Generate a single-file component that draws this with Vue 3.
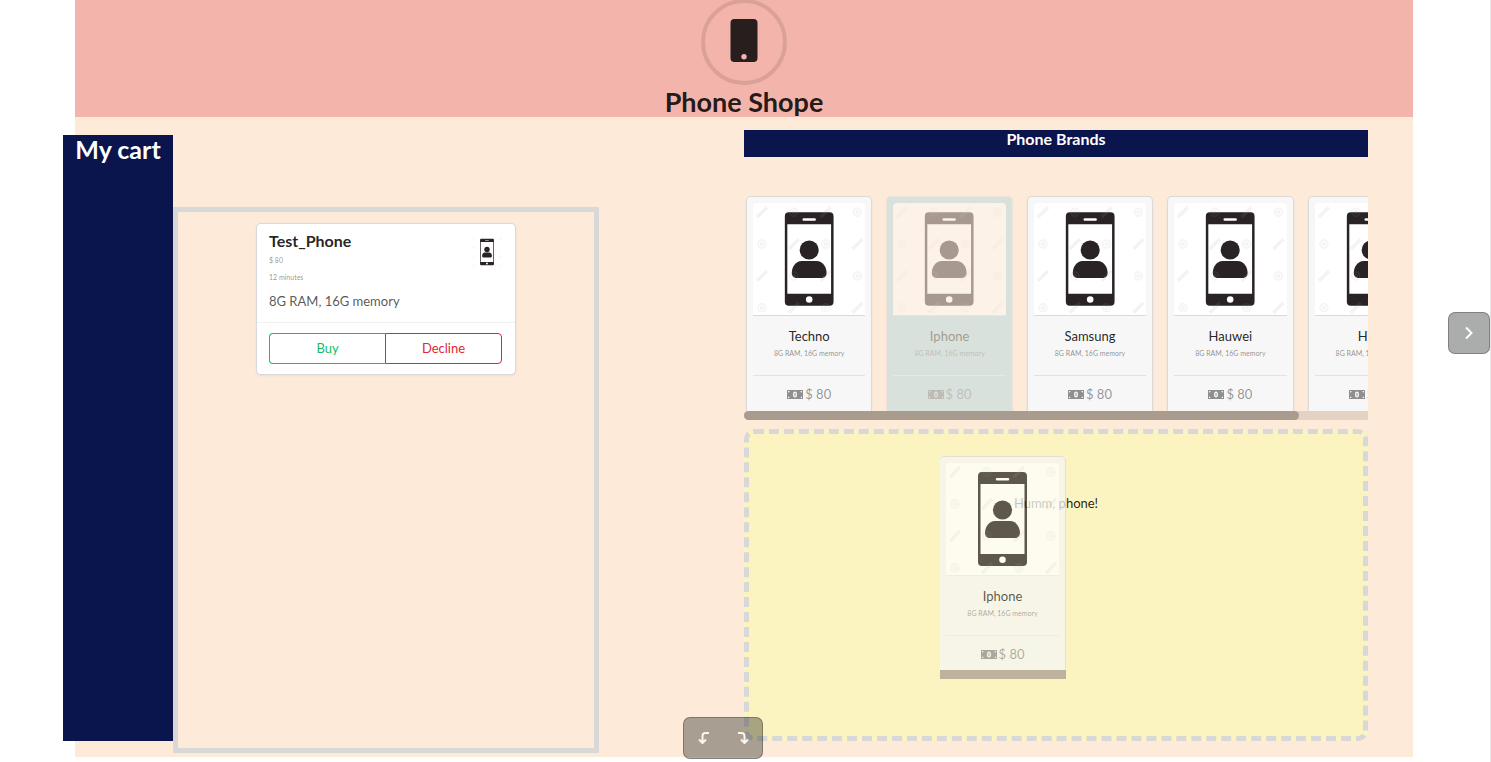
<script setup>
const phones = [
  { id: 1, name: 'Techno', memory: '8G RAM, 16G memory', price: 80 },
  { id: 2, name: 'Iphone', memory: '8G RAM, 16G memory', price: 80, dragging: true },
  { id: 3, name: 'Samsung', memory: '8G RAM, 16G memory', price: 80 },
  { id: 4, name: 'Hauwei', memory: '8G RAM, 16G memory', price: 80 },
  { id: 5, name: 'HTC', memory: '8G RAM, 16G memory', price: 80 },
]
const dragged = phones[1]

const marks = []
for (let row = 0; row < 4; row++) {
  for (let col = 0; col < 4; col++) {
    marks.push({ x: 9 + col * 32, y: 9 + row * 32, round: (row + col) % 2 === 1 })
  }
}
</script>

<template>
  <svg class="defs" aria-hidden="true">
    <symbol id="phone-art" viewBox="0 0 113 112">
      <path
        fill-rule="evenodd"
        fill="#292326"
        d="M36 9h41a4 4 0 0 1 4 4v86a4 4 0 0 1-4 4H36a4 4 0 0 1-4-4V13a4 4 0 0 1 4-4ZM34.500 21v70h44V21ZM51 15a1 1 0 0 0 0 2.500h11a1 1 0 0 0 0-2.500ZM56.500 93.500a3.300 3.300 0 1 0 0 6.600 3.300 3.300 0 0 0 0-6.600Z"
      />
      <circle cx="56.500" cy="47" r="9.600" fill="#292326" />
      <path d="M49 58h15c6 0 10 6 10 12 0 3-2 5-5 5H44c-3 0-5-2-5-5 0-6 4-12 10-12Z" fill="#292326" />
      <g v-for="(m, i) in marks" :key="i" fill="none" stroke="#999" stroke-opacity=".12">
        <g v-if="m.round" stroke-width="1.500">
          <circle :cx="m.x" :cy="m.y" r="4" />
          <circle :cx="m.x" :cy="m.y" r="1.500" />
        </g>
        <path v-else :d="`M${m.x - 5} ${m.y + 5}l10-10`" stroke-width="3.500" />
      </g>
    </symbol>
    <symbol id="money" viewBox="0 0 16 9">
      <path
        fill="currentColor"
        fill-rule="evenodd"
        d="M0 0h16v9H0ZM1 1v1.500A1.500 1.500 0 0 0 2.500 1ZM13.500 1A1.500 1.500 0 0 0 15 2.500V1ZM1 6.500V8h1.500A1.500 1.500 0 0 0 1 6.500ZM15 6.500A1.500 1.500 0 0 0 13.500 8H15ZM8 1.500c-1.300 0-2 1.300-2 3s.7 3 2 3 2-1.300 2-3-.7-3-2-3Z"
      />
      <path d="M7.500 3h1v3h-1Z" fill="currentColor" />
    </symbol>
  </svg>

  <div class="page">
    <header class="banner">
      <svg class="logo" viewBox="0 1 86 85" aria-hidden="true">
        <circle cx="43" cy="43" r="41" fill="none" stroke="#000" stroke-opacity=".1" stroke-width="4" />
        <path
          fill-rule="evenodd"
          fill="#271e1d"
          d="M33.500 20h19a4 4 0 0 1 4 4v35a4 4 0 0 1-4 4h-19a4 4 0 0 1-4-4V24a4 4 0 0 1 4-4ZM43 55a2.700 2.700 0 1 0 0 5.400 2.700 2.700 0 0 0 0-5.400Z"
        />
      </svg>
      <h1>Phone Shope</h1>
    </header>

    <main class="workspace">
      <section class="left">
        <aside class="cart-label"><h2>My cart</h2></aside>
        <div class="cart">
          <article class="order">
            <div class="order-body">
              <svg class="thumb" aria-hidden="true"><use href="#phone-art" /></svg>
              <h3>Test_Phone</h3>
              <p class="meta">$ 80</p>
              <p class="meta">12 minutes</p>
              <p class="spec">8G RAM, 16G memory</p>
            </div>
            <div class="actions">
              <button type="button" class="buy">Buy</button>
              <button type="button" class="decline">Decline</button>
            </div>
          </article>
        </div>
      </section>

      <section class="right">
        <h2 class="brands">Phone Brands</h2>
        <div class="strip">
          <article v-for="p in phones" :key="p.id" class="card" :class="{ dragging: p.dragging }">
            <div class="picture"><svg aria-hidden="true"><use href="#phone-art" /></svg></div>
            <div class="info">
              <h3>{{ p.name }}</h3>
              <p>{{ p.memory }}</p>
            </div>
            <div class="price"><svg aria-hidden="true"><use href="#money" /></svg>$ {{ p.price }}</div>
          </article>
        </div>
        <div class="track"><div class="thumb-bar"></div></div>

        <div class="dropzone">
          <p class="hint">Humm, phone!</p>
          <div class="ghost">
            <article class="card">
              <div class="picture"><svg aria-hidden="true"><use href="#phone-art" /></svg></div>
              <div class="info">
                <h3>{{ dragged.name }}</h3>
                <p>{{ dragged.memory }}</p>
              </div>
              <div class="price"><svg aria-hidden="true"><use href="#money" /></svg>$ {{ dragged.price }}</div>
            </article>
            <div class="ghost-bar"></div>
          </div>
        </div>
      </section>
    </main>
  </div>

  <div class="history">
    <button type="button" aria-label="Undo">
      <svg viewBox="0 0 12 12"><path d="M11 1H7.500Q4.500 1 4.500 4v7M1 7.500 4.500 11 8 7.500" /></svg>
    </button>
    <button type="button" aria-label="Redo">
      <svg viewBox="0 0 12 12"><path d="M1 1h3.500q3 0 3 3v7M4 7.500 7.500 11 11 7.500" /></svg>
    </button>
  </div>
  <button type="button" class="next" aria-label="Next">
    <svg viewBox="0 0 12 14"><path d="m3 1.500 5.500 5.500L3 12.500" /></svg>
  </button>
</template>

<style>
body {
  margin: 0;
  background: #fff;
}
#app {
  position: relative;
  min-height: 100vh;
  box-sizing: border-box;
  border-right: 1px solid #e8e8e8;
  overflow: hidden;
  font-family: Lato, 'Open Sans', sans-serif;
  font-size: 13px;
  color: rgba(0, 0, 0, 0.87);
}
</style>

<style scoped>
* {
  box-sizing: border-box;
}
h1,
h2,
h3,
p {
  margin: 0;
}
.defs {
  position: absolute;
  width: 0;
  height: 0;
}
.page {
  display: flex;
  flex-direction: column;
  min-height: calc(100vh - 5px);
  margin: 0 77px 0 75px;
  background: #fdead9;
}
.banner {
  display: flex;
  flex-direction: column;
  align-items: center;
  height: 117px;
  background: #f3b4ab;
}
.logo {
  flex: none;
  width: 86px;
  height: 85px;
}
h1 {
  font-size: 27px;
  line-height: 34px;
}
.workspace {
  flex: 1;
  display: grid;
  grid-template-columns: 1fr 1fr;
}
.left {
  display: flex;
}
.cart-label {
  flex: none;
  width: 110px;
  margin: 18px 0 16px -12px;
  background: #0a144d;
  color: #fff;
  text-align: center;
}
.cart-label h2 {
  font-size: 25px;
  line-height: 28px;
}
.cart {
  flex: 1;
  margin: 90px 145px 4px 0;
  padding: 12px;
  border: 5px solid #d8d8d8;
}
.order {
  width: 258px;
  margin: 0 auto;
  border-radius: 4px;
  background: #fff;
  box-shadow: 0 0 0 1px #d9d8da, 0 1px 3px #d4d4d5;
}
.order-body {
  padding: 7px 12px;
  height: 98px;
}
.thumb {
  float: right;
  width: 32px;
  height: 32px;
  margin: 5px 0 0;
}
.order h3 {
  margin-bottom: 1px;
  font-size: 16px;
  line-height: 20px;
}
.meta {
  color: rgba(0, 0, 0, 0.45);
  font-size: 7px;
  line-height: 17px;
}
.spec {
  margin-top: 6px;
  color: rgba(0, 0, 0, 0.68);
  line-height: 18px;
}
.actions {
  display: flex;
  padding: 10px 13px 10px 12px;
  border-top: 1px solid #f1f1f1;
}
.actions button {
  flex: 1;
  height: 31px;
  padding: 0 0 2px;
  background: #fff;
  font: inherit;
}
.actions .buy {
  border: 1px solid #21ba62;
  border-right: 0;
  border-radius: 4px 0 0 4px;
  color: #12bd62;
}
.actions .decline {
  border: 1px solid #db2834;
  border-radius: 0 4px 4px 0;
  color: #e02733;
}
.right {
  display: flex;
  flex-direction: column;
  min-width: 0;
  padding: 13px 45px 16px 0;
}
.brands {
  height: 27px;
  background: #0a144d;
  color: #fff;
  font-size: 16px;
  line-height: 17px;
  text-align: center;
}
.strip {
  display: grid;
  grid-auto-flow: column;
  grid-auto-columns: 22.5%;
  margin-top: 35px;
  padding-top: 5px;
  overflow: hidden;
}
.strip .card {
  margin: 0 13px 0 3px;
}
.card {
  height: 214px;
  padding: 6px;
  border-radius: 4px 4px 0 0;
  background: #f7f7f7;
  box-shadow: 0 0 0 1px #dcdad9, 0 1px 3px #d4d4d5;
  text-align: center;
}
.card.dragging {
  background: #a3d4df;
  opacity: 0.4;
}
.picture {
  height: 113px;
  border-bottom: 1px solid #d9d9d9;
  border-radius: 4px 4px 0 0;
  background: #fff;
}
.picture svg {
  display: block;
  width: 100%;
  height: 112px;
}
.info {
  height: 60px;
  padding-top: 11px;
  border-bottom: 1px solid #e2e2e2;
}
.info h3 {
  font-size: 13px;
  font-weight: 400;
  line-height: 18px;
}
.info p {
  color: rgba(0, 0, 0, 0.45);
  font-size: 7px;
  line-height: 16px;
}
.price {
  display: flex;
  align-items: center;
  justify-content: center;
  gap: 2px;
  height: 36px;
  color: rgba(0, 0, 0, 0.42);
}
.price svg {
  width: 16px;
  height: 9px;
}
.track {
  position: relative;
  flex: none;
  height: 9px;
  border-radius: 5px 0 0 5px;
  background: #e4d2c3;
}
.thumb-bar {
  width: 89%;
  height: 9px;
  border-radius: 5px;
  background: #a99c8f;
}
.dropzone {
  position: relative;
  flex: 1;
  margin-top: 9px;
  padding-top: 59px;
  border: 5px dashed #d8d8d8;
  border-radius: 10px;
  background: #fbf4c0;
}
.hint {
  line-height: 20px;
  text-align: center;
}
.ghost {
  position: absolute;
  top: 22px;
  left: 191px;
  width: 126px;
  padding-top: 1px;
  overflow: hidden;
  opacity: 0.75;
  background: #f5f6f6;
}
.ghost .card {
  height: 213px;
  margin-right: 1px;
  background: #f5f6f6;
}
.ghost .picture,
.ghost .info {
  border-color: #ebebe8;
}
.ghost-bar {
  position: relative;
  height: 9px;
  background: #a99c8f;
}
.history,
.next {
  position: absolute;
  border: 1px solid rgba(0, 0, 0, 0.25);
  border-radius: 7px;
  background: rgba(0, 4, 4, 0.33);
}
.history {
  bottom: 3px;
  left: 683px;
  display: flex;
  width: 80px;
  height: 42px;
}
.history button {
  display: flex;
  flex: 1;
  align-items: center;
  justify-content: center;
  padding: 0;
  border: 0;
  background: none;
}
.history svg,
.next svg {
  width: 12px;
  height: 12px;
  fill: none;
  stroke: #fff4ea;
  stroke-width: 2;
}
.next {
  top: 312px;
  right: 0;
  display: flex;
  align-items: center;
  justify-content: center;
  width: 42px;
  height: 42px;
  padding: 0;
}
.next svg {
  height: 14px;
  stroke: #fff;
}
</style>
